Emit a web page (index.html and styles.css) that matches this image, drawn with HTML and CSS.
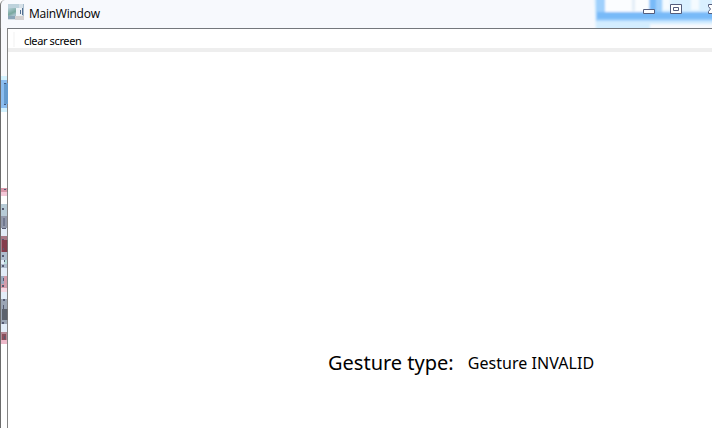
FILE: index.html
```
<!DOCTYPE html>
<html lang="en">
<head>
<meta charset="utf-8">
<title>MainWindow</title>
<link rel="stylesheet" href="styles.css">
</head>
<body>
<div class="window">
  <header class="titlebar">
    <svg class="app-icon" width="16" height="16" viewBox="0 0 16 16" shape-rendering="crispEdges">
      <defs><linearGradient id="app" x2="0.5" y2="1"><stop stop-color="#b8d2dc"/><stop offset=".7" stop-color="#79a79e"/><stop offset="1" stop-color="#a6c1cb"/></linearGradient></defs>
      <path fill="#d5e0e8" d="M0 0h16v16H0z"/>
      <path fill="#bdd2dc" d="M0 0h11v4H0z"/>
      <path fill="url(#app)" d="M0 4h8v8H0z"/>
      <path fill="#8ba5b8" d="M0 12h7v3H0z"/>
      <path fill="#eef3f7" d="M8 4h6v8H8z"/>
      <path fill="#d3d0d0" d="M7 12h9v4H7z"/>
      <path fill="#536f91" d="M14 4h1v7h-1zM12 6h1v4h-1z"/>
      <path fill="#a7bccd" d="M15 0h1v12h-1z"/>
    </svg>
    <h1 class="title">MainWindow</h1>
    <svg class="controls" width="132" height="28" viewBox="0 0 132 28">
      <defs>
        <filter id="soft" x="-20%" y="-50%" width="140%" height="200%"><feGaussianBlur stdDeviation="1.2"/></filter>
      </defs>
      <g filter="url(#soft)">
        <path fill="#d3edff" d="M14-6h130v30H70v6H16z"/>
        <path fill="#9fd0fc" d="M16-6h128v27H16z"/>
        <path fill="#fbfdff" d="M25-6h44v18H25z"/>
        <path fill="#d9f0ff" d="M82-6h62v18H82z"/>
        <path fill="#78baf8" d="M17 12h127v7H17zM70-6h6v20h-6z"/>
        <path fill="#f5fbff" d="M83-6h7v16h-7zM111-6h8v16h-8z"/>
        <path fill="#e2edf7" d="M52-6h3v17h-3z"/>
      </g>
      <g fill="#fff" stroke="#555d7c">
        <path d="M63.500 9.500h11v4h-11z"/>
        <path d="M90.500 4.500h11v9h-11z"/>
        <path d="M93.500 7.500h5v3h-5z"/>
        <path d="M128.500 4.500h4v9h-4v-2l2-2.500-2-2.500z"/>
      </g>
    </svg>
  </header>
  <div class="frame">
    <svg class="edge" width="8" height="400" viewBox="0 28 8 400" shape-rendering="crispEdges">
      <path fill="#f8f9fc" d="M1 28h6v50H1z"/>
      <path fill="#d2f2ff" d="M1 76h6v36H1z"/>
      <path fill="#8bbdf0" d="M1 80h6v28H1z"/>
      <path fill="#659bce" d="M4 83h4v21H4z"/>
      <path fill="#405880" d="M4 83h2v1H4zM4 104h2v1H4z"/>
      <path fill="#f4c8d8" d="M1 188h6v8H1z"/>
      <path fill="#d997a9" d="M1 188h7v4H1z"/>
      <path fill="#e3edf8" d="M1 204h6v128H1z"/>
      <path fill="#b7cbd6" d="M1 204h6v12H1z"/>
      <path fill="#9299ab" d="M1 216h6v12H1z"/>
      <path fill="#70788e" d="M3 218h2v8H3z"/>
      <path fill="#a77886" d="M1 236h6v16H1z"/>
      <path fill="#843d4c" d="M2 240h6v12H2z"/>
      <path fill="#aebccd" d="M1 252h6v8H1zM1 264h6v4H1z"/>
      <path fill="#b9dedc" d="M4 260h4v4H4z"/>
      <path fill="#d39ba9" d="M1 276h6v12H1z"/>
      <path fill="#9ba9bf" d="M1 276h3v8H1z"/>
      <path fill="#f6d7e2" d="M1 288h6v4H1z"/>
      <path fill="#9ba5b4" d="M1 299h6v25H1z"/>
      <path fill="#5c626c" d="M2 309h6v11H2z"/>
      <path fill="#b58995" d="M1 332h6v8H1z"/>
      <path fill="#894f5b" d="M2 334h4v6H2z"/>
      <path fill="#eeb9ca" d="M1 340h6v4H1z"/>
      <path fill="#555a72" d="M4 189h2v1H4zM2 208h2v2H2zM2 228h4v1H2zM2 239h2v1H2zM3 248h1v2H3zM2 255h2v2H2zM4 260h1v2H4zM2 265h2v2H2zM3 278h1v3H3zM2 285h2v2H2zM3 299h2v2H3zM3 305h1v4H3zM2 322h2v2H2zM4 336h1v3H4z"/>
      <path fill="#6c6c6c" d="M0 28h1v400H0z"/>
      <path fill="#777" fill-opacity=".9" d="M7 28h1v55H7zM7 104h1v324H7z"/>
    </svg>
    <main class="client">
      <nav class="menubar"><span class="grip"></span><span class="menu-item">clear screen</span></nav>
      <section class="status">
        <span class="label">Gesture type:</span>
        <span class="value">Gesture INVALID</span>
      </section>
    </main>
  </div>
</div>
</body>
</html>
```
FILE: styles.css
```
body {
  margin: 0;
  overflow: hidden;
  font-family: "Noto Sans", "Open Sans", sans-serif;
  color: #000;
  background: #fff;
}

.window {
  width: 712px;
  height: 428px;
  display: flex;
  flex-direction: column;
}

.titlebar {
  box-sizing: border-box;
  height: 28px;
  display: flex;
  align-items: flex-start;
  border-left: 1px solid #777;
  border-top-left-radius: 5px;
  background: #f7f9fd;
}

.app-icon {
  margin: 4px 0 0 7px;
}

.title {
  margin: 5px 0 0 5px;
  font: 400 12px/17px "Open Sans", sans-serif;
  letter-spacing: -0.25px;
  white-space: nowrap;
}

.controls {
  margin-left: auto;
}

.frame {
  flex: 1;
  display: flex;
}

.client {
  flex: 1;
  border-top: 1px solid #74777c;
}

.menubar {
  display: flex;
  height: 19px;
  padding-left: 5px;
  border-bottom: 4px solid #eee;
  font-size: 11px;
  line-height: 23px;
}

.grip {
  width: 2px;
  height: 15px;
  margin: 3px 9px 0 0;
  background: #f8f8f8;
}

.menu-item {
  letter-spacing: -0.38px;
}

.status {
  display: flex;
  align-items: flex-start;
  gap: 14px;
  padding: 297px 0 0 320px;
  line-height: 28px;
  white-space: nowrap;
}

.label {
  font-size: 20px;
}

.value {
  font-size: 16px;
  letter-spacing: 0.05px;
}
```
